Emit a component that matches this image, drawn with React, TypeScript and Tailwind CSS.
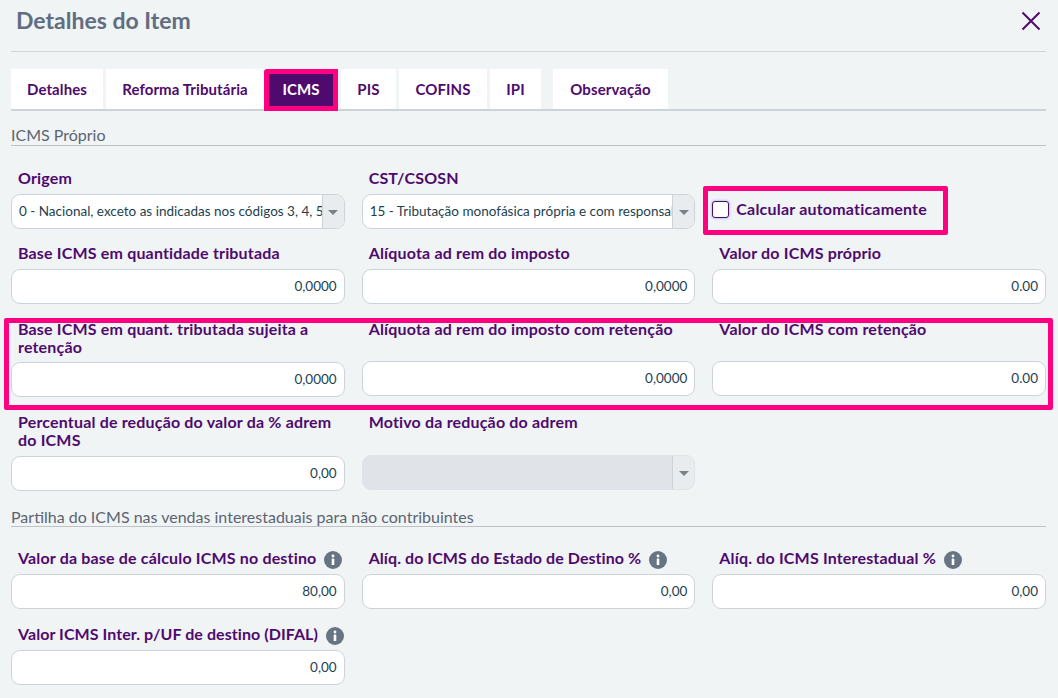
import React, { ReactNode } from 'react';

const purple = 'text-[#4f0a6e]';

const Info = () => (
  <svg width="18" height="18" viewBox="0 0 18 18" className="mt-[2px] -mb-[2px] shrink-0">
    <circle cx="9" cy="9" r="9" fill="#677484" />
    <circle cx="9" cy="5" r="1.4" fill="#fff" />
    <rect x="7.7" y="7.5" width="2.6" height="6.5" rx="0.6" fill="#fff" />
  </svg>
);

interface FieldProps {
  label: string;
  value?: string;
  info?: boolean;
  tight?: boolean;
  disabled?: boolean;
  select?: boolean;
  // small per-row nudges of the label / input
  labelClass?: string;
  inputClass?: string;
}

const Caret = () => (
  <span className="flex w-[22px] shrink-0 items-center justify-center self-stretch border-l border-[#ccd4da] bg-[#e9ecef]">
    <span className="mt-[2px] border-x-[5px] border-t-[5px] border-x-transparent border-t-[#7b8189]" />
  </span>
);

const Field = ({ label, value, info, tight, disabled, select, labelClass = 'pb-[7px]', inputClass = '' }: FieldProps) => (
  <div className="flex flex-col justify-between">
    <label className={`flex items-center gap-[8px] pl-[7px] text-[16px] leading-[18px] font-bold tracking-[0.17px] ${purple} ${labelClass}`}>
      <span className={`${info ? 'whitespace-nowrap' : ''} ${tight ? 'tracking-[0.07px]' : ''}`}>{label}</span>
      {info && <Info />}
    </label>
    <div
      className={`flex h-[35px] items-center overflow-hidden rounded-[9px] border ${inputClass} ${
        disabled ? 'border-[#e0e3e7] bg-[#e0e3e7]' : 'border-[#ccd4da] bg-white'
      }`}
    >
      <span
        className={`min-w-0 flex-1 whitespace-nowrap overflow-hidden px-[7px] text-[13.5px] text-[#1d3f4f] ${
          select ? 'text-left' : 'text-right'
        }`}
      >
        {value}
      </span>
      {select && <Caret />}
    </div>
  </div>
);

const Section = ({ children, className }: { children: ReactNode; className: string }) => (
  <div className={`border-b border-[#bcc2c7] text-[16px] leading-[19px] text-[#5c6470] ${className}`}>
    {children}
  </div>
);

const tabs = [
  { name: 'Detalhes', w: 'w-[92px]' },
  { name: 'Reforma Tributária', w: 'w-[158px]' },
  { name: 'ICMS', w: 'w-[74px] -ml-[3px]', active: true },
  { name: 'PIS', w: 'w-[55px]' },
  { name: 'COFINS', w: 'w-[88px]' },
  { name: 'IPI', w: 'w-[51px]' },
  { name: 'Observação', w: 'w-[115px] ml-[9px]' },
];

const nudged = 'pt-[1px] pb-[6px]';

export default function App() {
  return (
    <div className="h-[698px] w-[1058px] overflow-hidden bg-[#f0f4f5] pl-[11px] pr-[12px] font-['Lato',sans-serif]">
      <div className="flex h-[52px] items-center justify-between border-b border-[#d0d5d8] pb-[10px] pl-[5px] pr-[5px]">
        <h1 className="text-[23px] font-bold text-[#616d80]">Detalhes do Item</h1>
        <svg width="20" height="20" viewBox="0 0 20 20" fill="none" stroke="#4f0a6e" strokeWidth="2">
          <path d="M1.5 1.5 18.5 18.5M18.5 1.5 1.5 18.5" />
        </svg>
      </div>

      <div className="mt-[17px] flex h-[42px] gap-[3px] border-b-2 border-[#ccd4da]">
        {tabs.map(t => (
          <div
            key={t.name}
            className={`relative flex items-center justify-center bg-white text-[15px] font-bold tracking-[0.1px] ${t.w} ${
              t.active ? 'text-white' : purple
            }`}
          >
            {t.active && (
              <div className="absolute -bottom-[2px] left-0 right-0 top-0 rounded-tl-[3px] border-[5px] border-[#ff0080] bg-[#4f0a6e]" />
            )}
            <span className="relative">{t.name}</span>
          </div>
        ))}
      </div>

      <Section className="mt-[14px] pb-[1px]">ICMS Próprio</Section>

      <div className="relative mt-[23px] grid grid-cols-3 gap-x-[17px] gap-y-[15px]">
        <Field label="Origem" select value="0 - Nacional, exceto as indicadas nos códigos 3, 4, 5 e 8" />
        <Field label="CST/CSOSN" select value="15 - Tributação monofásica própria e com responsabilidade" />
        <div className="flex items-start gap-[7px] pt-[31px]">
          <span className="mt-[1px] h-[17px] w-[17px] rounded-[3px] border border-[#4f0a6e] bg-white shadow-[0_0_3px_#8a9bf0]" />
          <span className={`text-[16px] leading-[18px] font-bold tracking-[0.2px] ${purple}`}>Calcular automaticamente</span>
          <div className="absolute left-[692px] top-[17px] h-[49px] w-[245px] rounded-[2px] border-[5px] border-[#ff0080]" />
        </div>

        <Field label="Base ICMS em quantidade tributada" value="0,0000" />
        <Field label="Alíquota ad rem do imposto" value="0,0000" />
        <Field label="Valor do ICMS próprio" value="0.00" />

        <Field label="Base ICMS em quant. tributada sujeita a retenção" value="0,0000" labelClass={nudged} />
        <Field label="Alíquota ad rem do imposto com retenção" value="0,0000" labelClass={nudged} inputClass="mb-[1px]" />
        <Field label="Valor do ICMS com retenção" value="0.00" labelClass={nudged} inputClass="mb-[1px]" />

        <Field label="Percentual de redução do valor da % adrem do ICMS" value="0,00" labelClass="pt-[1px] pb-[7px]" inputClass="-mb-[1px]" />
        <Field label="Motivo da redução do adrem" disabled select labelClass={nudged} />
        <div />
        <div className="absolute left-[-7px] top-[149px] h-[92px] w-[1049px] rounded-[2px] border-[5px] border-[#ff0080]" />
      </div>

      <Section className="mt-[17px]">Partilha do ICMS nas vendas interestaduais para não contribuintes</Section>

      <div className="mt-[22px] grid grid-cols-3 gap-x-[17px] gap-y-[16px]">
        <Field label="Valor da base de cálculo ICMS no destino" value="80,00" info />
        <Field label="Alíq. do ICMS do Estado de Destino %" value="0,00" info tight />
        <Field label="Alíq. do ICMS Interestadual %" value="0,00" info />
        <Field label="Valor ICMS Inter. p/UF de destino (DIFAL)" value="0,00" info tight />
      </div>
    </div>
  );
}
